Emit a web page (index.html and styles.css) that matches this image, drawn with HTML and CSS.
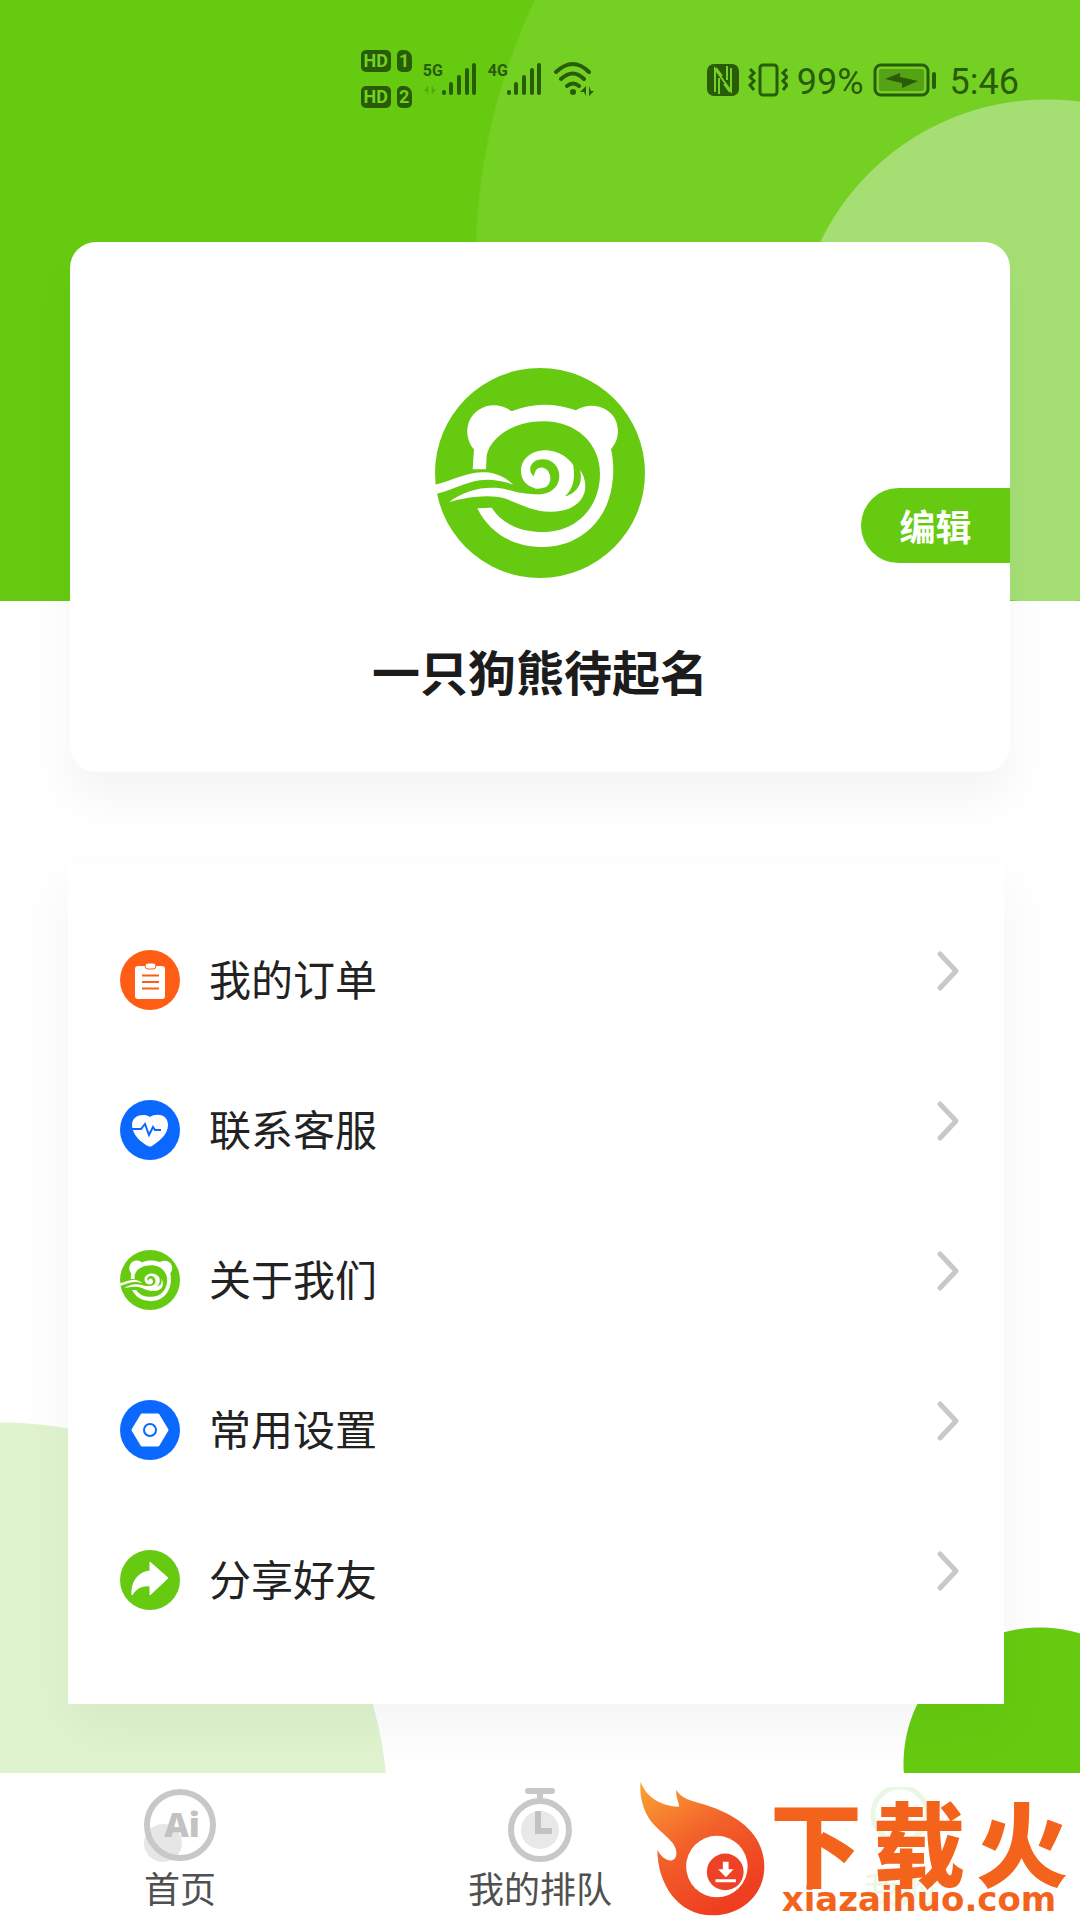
FILE: index.html
```html
<!DOCTYPE html>
<html lang="zh-CN">
<head>
<meta charset="utf-8">
<meta name="viewport" content="width=device-width, initial-scale=1">
<title>我的</title>
<link rel="stylesheet" href="styles.css">
</head>
<body>
<svg class="defs" aria-hidden="true">
  <symbol id="bear" viewBox="45 53 630 630">
    <circle cx="360" cy="368" r="315" fill="#66cb10"/>
    <path fill="#fff" d="M158 357 L162 297 C142 275 136 240 148 212 C168 165 230 148 275 183 C335 157 405 157 468 180 C510 152 570 168 588 212 C600 245 592 275 573 297 C583 340 580 380 576 405 C560 520 470 590 370 590 C280 590 210 550 172 474 L215 472 C245 520 300 545 370 545 C470 545 540 470 540 370 C540 280 470 213 370 213 C280 213 212 260 200 315 L198 357 Z"/>
    <path fill="#fff" d="M45 403 C100 390 145 364 195 366 C235 368 260 385 280 403 C225 384 190 386 155 395 C120 405 85 422 51 430 Z"/>
    <path fill="#fff" d="M88 455 C140 415 210 404 262 418 C300 430 335 433 352 431 L345 414 C315 405 303 385 303 362 C303 325 335 300 378 300 C425 302 462 332 474 376 L477 355 C494 375 499 400 494 425 C480 470 435 485 390 484 C330 484 290 452 240 441 C190 432 130 443 88 455 Z"/>
    <path fill="#66cb10" d="M262 400 C300 418 355 420 378 410 C398 398 395 360 370 352 C352 350 345 360 342 378 C324 365 328 340 350 330 C390 318 418 345 418 378 C417 412 390 434 350 432 C315 430 285 412 262 400 Z"/>
    <path fill="#66cb10" d="M435 438 C456 418 467 392 460 346 L478 352 C492 395 474 427 435 438 Z"/>
  </symbol>
  <symbol id="chevron" viewBox="0 0 24 42">
    <path d="M4 4 L20 21 L4 38" fill="none" stroke="#c8c8c8" stroke-width="5" stroke-linecap="round" stroke-linejoin="round"/>
  </symbol>
  <symbol id="signal" viewBox="0 0 36 34">
    <path d="M3 30v1M10 22v9M18 15v16M26 8v23M33 3v28" fill="none" stroke="#285c07" stroke-width="4" stroke-linecap="round"/>
  </symbol>
</svg>

<div class="page">
  <header class="status">
    <div class="status-group">
      <div class="sims">
        <div class="sim"><span class="hd">HD</span><span class="slot">1</span></div>
        <div class="sim"><span class="hd">HD</span><span class="slot">2</span></div>
      </div>
      <div class="network">
        <div class="network-type"><span>5G</span>
          <svg class="traffic" viewBox="0 0 16 12"><path d="M6 12V1L1 7h3M10 0v11l5-6h-3" fill="#4fa80c"/></svg>
        </div>
        <svg class="signal"><use href="#signal"/></svg>
      </div>
      <div class="network">
        <div class="network-type"><span>4G</span></div>
        <svg class="signal"><use href="#signal"/></svg>
      </div>
      <svg class="wifi" viewBox="0 0 42 36" fill="none" stroke="#285c07" stroke-width="4" stroke-linecap="round">
        <path d="M3 11Q20 -5 36 11M8 18Q20 7 31 18M14 25Q20 20 26 25"/>
        <circle cx="20" cy="31" r="3" fill="#285c07" stroke="none"/>
        <path d="M33 35V25L27 31h4zM36 25v10l5-5h-3z" fill="#285c07" stroke="none"/>
      </svg>
    </div>
    <div class="status-group status-right">
      <svg class="nfc" viewBox="0 0 32 32">
        <rect width="32" height="32" rx="7" fill="#285c07"/>
        <path d="M8 28V5L24 27V4M9 4l6 8M17 20l6 8M12 30V14M20 2v14" fill="none" stroke="#75d024" stroke-width="2"/>
      </svg>
      <svg class="vibrate" viewBox="0 0 40 34" fill="none" stroke="#285c07" stroke-width="3">
        <rect x="12" y="2" width="17" height="30" rx="3"/>
        <path d="M2 6l4 4-4 4 4 4-4 4 4 5M39 6l-4 4 4 4-4 4 4 4-4 5"/>
      </svg>
      <span class="status-text">99%</span>
      <svg class="battery" viewBox="0 0 64 34">
        <rect x="2" y="2" width="53" height="30" rx="6" fill="none" stroke="#285c07" stroke-width="3"/>
        <rect x="6" y="6" width="45" height="22" rx="2" fill="#55a214"/>
        <path d="M12 16L27 10V14L45 18L29 25V20Z" fill="#285c07"/>
        <rect x="59" y="9" width="4" height="17" rx="2" fill="#285c07"/>
      </svg>
      <time class="status-text time">5:46</time>
    </div>
  </header>

  <main class="content">
    <section class="profile">
      <svg class="avatar" role="img" aria-label="头像"><use href="#bear"/></svg>
      <h1 class="name">一只狗熊待起名</h1>
      <button class="edit" type="button">编辑</button>
    </section>

    <ul class="menu">
      <li><a class="row" href="#orders">
        <svg class="row-icon" viewBox="0 0 60 60"><circle cx="30" cy="30" r="30" fill="#ff5d15"/><rect x="15" y="16" width="30" height="33" rx="3" fill="#fff"/><rect x="25" y="13" width="11" height="6" rx="3" fill="#fff" stroke="#ff5d15"/><path d="M22 25.500h17M22 32h17M22 38.500h17" stroke="#ff5d15" stroke-width="2"/></svg>
        <span class="row-label">我的订单</span><svg class="chevron"><use href="#chevron"/></svg></a></li>
      <li><a class="row" href="#service">
        <svg class="row-icon" viewBox="0 0 60 60"><circle cx="30" cy="30" r="30" fill="#0b68ff"/><path d="M30 17C36 13 48 14 48 25C48 36 36 43 32 46Q30 47 28 46C22 43 12 35 12 25C12 15 24 13 30 17Z" fill="#fff"/><path d="M12 29h9l4-5 4 11 4-8 2 3h6" fill="none" stroke="#0b68ff" stroke-width="2"/></svg>
        <span class="row-label">联系客服</span><svg class="chevron"><use href="#chevron"/></svg></a></li>
      <li><a class="row" href="#about">
        <svg class="row-icon"><use href="#bear"/></svg>
        <span class="row-label">关于我们</span><svg class="chevron"><use href="#chevron"/></svg></a></li>
      <li><a class="row" href="#settings">
        <svg class="row-icon" viewBox="0 0 60 60"><circle cx="30" cy="30" r="30" fill="#0b68ff"/><path d="M22 15H38L47 30L38 45H22L13 30Z" fill="#fff" stroke="#fff" stroke-width="3" stroke-linejoin="round"/><circle cx="30" cy="30" r="6" fill="none" stroke="#0b68ff" stroke-width="2"/></svg>
        <span class="row-label">常用设置</span><svg class="chevron"><use href="#chevron"/></svg></a></li>
      <li><a class="row" href="#share">
        <svg class="row-icon" viewBox="0 0 60 60"><circle cx="30" cy="30" r="30" fill="#66cb10"/><path d="M30 12L48 28L30 45V36C21 35 16 39 12 45C11 32 18 22 30 21Z" fill="#fff" stroke="#fff" stroke-linejoin="round"/></svg>
        <span class="row-label">分享好友</span><svg class="chevron"><use href="#chevron"/></svg></a></li>
    </ul>
  </main>

  <nav class="tabs">
    <a class="tab" href="#home">
      <svg class="tab-icon" viewBox="0 0 76 76"><circle cx="21" cy="56" r="19" fill="#e6e6e6"/><circle cx="38" cy="38" r="33" fill="none" stroke="#c8c8c8" stroke-width="6"/><text class="ai" x="40" y="50" text-anchor="middle">Ai</text></svg>
      <span>首页</span>
    </a>
    <a class="tab" href="#queue">
      <svg class="tab-icon" viewBox="0 0 76 76"><circle cx="38" cy="43" r="19" fill="#e8e8e8"/><circle cx="38" cy="43" r="29" fill="none" stroke="#c8c8c8" stroke-width="6"/><path d="M26 4h24M38 4v9" stroke="#c8c8c8" stroke-width="6" stroke-linecap="round"/><path d="M36 24v20h14" fill="none" stroke="#c2c2c2" stroke-width="6"/></svg>
      <span>我的排队</span>
    </a>
    <a class="tab tab-mine" href="#mine">
      <svg class="tab-icon" viewBox="0 0 76 76"><circle cx="38" cy="27" r="27" fill="none" stroke="#ebf7e2" stroke-width="5"/></svg>
      <span>我的</span>
    </a>
    <div class="brand">
      <svg class="flame" viewBox="35 60 380 410">
        <defs><linearGradient id="fire" x1="0" y1="0" x2=".6" y2="1"><stop offset="0" stop-color="#fba534"/><stop offset=".5" stop-color="#f2612a"/><stop offset="1" stop-color="#ee3d20"/></linearGradient></defs>
        <path fill="url(#fire)" d="M40 65C55 110 100 138 155 140C155 125 143 110 147 90C165 122 205 123 250 140C350 175 410 235 410 320C410 400 345 465 255 465C150 465 90 370 90 268C105 303 145 315 147 280C148 240 95 220 65 175C43 140 36 100 40 65Z"/>
        <circle cx="268" cy="319" r="92" fill="#fff"/>
        <circle cx="293" cy="335" r="55" fill="#ee4226"/>
        <path fill="#fff" d="M286 305h17v22h15l-23 24-23-24h14zM264 357h61v9h-61z"/>
      </svg>
      <div class="brand-text"><strong class="brand-name"><span>下</span><span>载</span><span>火</span></strong><span class="brand-url">xiazaihuo.com</span></div>
    </div>
  </nav>
</div>
</body>
</html>
```
FILE: styles.css
```css
* { box-sizing: border-box; }

body {
  margin: 0;
  background: #fff;
  color: #222;
  font-family: "Noto Sans CJK SC", sans-serif;
}

a { color: inherit; text-decoration: none; }
svg { display: block; flex: none; }
.defs { display: none; }

.page {
  display: flex;
  flex-direction: column;
  min-height: 100vh;
  background:
    radial-gradient(circle 252px at calc(100% - 33px) 351px, #a5df74 251px, transparent 252px) 0 0 / 100% 601px no-repeat,
    radial-gradient(circle 602px at calc(100% - 3px) 260px, #75d024 600px, transparent 602px) 0 0 / 100% 601px no-repeat,
    linear-gradient(#66cb10, #66cb10) 0 0 / 100% 601px no-repeat,
    #fefefe;
}

/* Status bar */
.status {
  display: flex;
  justify-content: flex-end;
  align-items: center;
  gap: 112px;
  padding: 50px 61px 0 0;
  color: #285c07;
  font-family: Roboto, sans-serif;
}
.status-group { display: flex; align-items: center; gap: 11px; }
.status-right { gap: 9px; padding-top: 2px; }
.sims { display: grid; gap: 14px; }
.sim { display: flex; gap: 6px; }
.hd, .slot {
  height: 22px;
  border-radius: 5px;
  background: #285c07;
  color: #75d024;
  font-size: 18px;
  font-weight: 700;
  line-height: 22px;
  text-align: center;
}
.hd { width: 30px; }
.slot { width: 15px; border-top-right-radius: 8px; }
.network { display: flex; align-items: flex-end; }
.network-type {
  width: 18px;
  height: 34px;
  font-size: 16px;
  font-weight: 700;
  line-height: 18px;
}
.traffic { width: 14px; height: 12px; margin-top: 4px; }
.signal { width: 36px; height: 34px; }
.wifi { width: 42px; height: 36px; }
.nfc { width: 32px; height: 32px; }
.vibrate { width: 40px; height: 34px; }
.battery { width: 64px; height: 34px; }
.status-text { padding-top: 4px; font-size: 36px; line-height: 40px; }
.time { margin-left: 4px; }

/* Profile card */
.content {
  flex: 1;
  padding: 134px 0 69px;
  background:
    radial-gradient(circle 137px at calc(100% - 40px) calc(100% - 9px), #66cb10 136px, transparent 137px),
    radial-gradient(circle 388px at 0 calc(100% + 37px), #e0f3cf 387px, transparent 388px);
}
.profile {
  position: relative;
  display: flex;
  flex-direction: column;
  align-items: center;
  margin: 0 70px;
  padding: 126px 0 74px;
  border-radius: 26px;
  background: #fff;
  box-shadow: 0 24px 40px rgba(0, 0, 0, .04);
}
.avatar { width: 210px; height: 210px; }
.name {
  margin: 64px 0 0;
  color: #1c1c1c;
  font-size: 48px;
  font-weight: 700;
  line-height: 56px;
}
.edit {
  position: absolute;
  top: 246px;
  right: 0;
  width: 149px;
  height: 75px;
  padding: 0;
  border: 0;
  border-radius: 38px 0 0 38px;
  background: #66cb10;
  color: #fff;
  font: 700 36px/75px "Noto Sans CJK SC", sans-serif;
}

/* Menu */
.menu {
  margin: 93px 76px 0 68px;
  padding: 40px 44px 49px 52px;
  background: #fff;
  box-shadow: 0 24px 48px rgba(0, 0, 0, .04);
  list-style: none;
}
.row { display: flex; align-items: center; gap: 29px; height: 150px; }
.row-icon { width: 60px; height: 60px; }
.row-label { flex: 1; padding-bottom: 4px; font-size: 42px; line-height: 60px; }
.chevron { width: 24px; height: 42px; margin-bottom: 18px; }

/* Tab bar */
.tabs {
  position: relative;
  display: grid;
  grid-template-columns: repeat(3, 1fr);
  height: 147px;
  background: #fff;
}
.tab {
  display: flex;
  flex-direction: column;
  align-items: center;
  gap: 2px;
  padding-top: 14px;
  color: #505050;
  font-size: 36px;
  line-height: 44px;
}
.tab-mine { color: #ebf7e2; }
.tab-icon { width: 76px; height: 76px; }
.ai { fill: #c2c2c2; font: 900 34px "Noto Sans", sans-serif; }

.brand {
  position: absolute;
  right: 8px;
  bottom: 3px;
  display: flex;
  color: #f4631c;
}
.flame { width: 127px; height: 137px; }
.brand-text { display: flex; flex-direction: column; align-items: center; padding-top: 18px; }
.brand-name { display: flex; gap: 11px; padding: 0 4px; font-size: 92px; font-weight: 900; line-height: 84px; }
.brand-url { font: 700 34px/34px "DejaVu Sans", sans-serif; }
```
